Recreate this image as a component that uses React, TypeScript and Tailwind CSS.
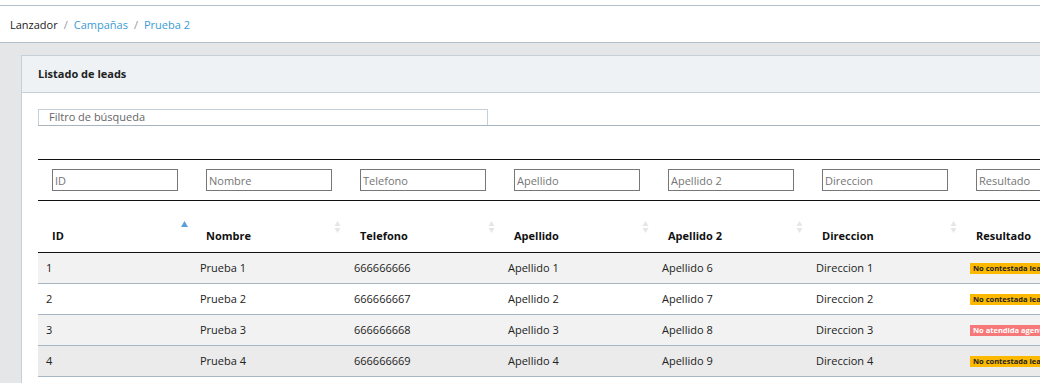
const columns = ['ID', 'Nombre', 'Telefono', 'Apellido', 'Apellido 2', 'Direccion', 'Resultado'];

type Lead = {
  id: number;
  nombre: string;
  telefono: string;
  apellido: string;
  apellido2: string;
  direccion: string;
  resultado: 'contestada' | 'atendida';
};

const leads: Lead[] = [
  { id: 1, nombre: 'Prueba 1', telefono: '666666666', apellido: 'Apellido 1', apellido2: 'Apellido 6', direccion: 'Direccion 1', resultado: 'contestada' },
  { id: 2, nombre: 'Prueba 2', telefono: '666666667', apellido: 'Apellido 2', apellido2: 'Apellido 7', direccion: 'Direccion 2', resultado: 'contestada' },
  { id: 3, nombre: 'Prueba 3', telefono: '666666668', apellido: 'Apellido 3', apellido2: 'Apellido 8', direccion: 'Direccion 3', resultado: 'atendida' },
  { id: 4, nombre: 'Prueba 4', telefono: '666666669', apellido: 'Apellido 4', apellido2: 'Apellido 9', direccion: 'Direccion 4', resultado: 'contestada' },
];

function SortIcon({ active }: { active?: boolean }) {
  if (active) {
    return (
      <svg width="7" height="6" viewBox="0 0 7 6" className="absolute right-[4px] top-[20px]">
        <path d="M3.5 0 L7 6 L0 6 Z" fill="#5a9fd8" />
      </svg>
    );
  }
  return (
    <svg width="7" height="12" viewBox="0 0 7 12" className="absolute right-[5px] top-[20px]">
      <path d="M3.5 0 L6.5 5 L0.5 5 Z" fill="#e6e6e6" />
      <path d="M3.5 12 L6.5 7 L0.5 7 Z" fill="#e6e6e6" />
    </svg>
  );
}

function Badge({ kind }: { kind: Lead['resultado'] }) {
  if (kind === 'atendida') {
    return (
      <span className="inline-block align-middle whitespace-nowrap bg-[#f77878] pl-[3px] pr-[3px] text-[7.5px] leading-[11px] font-bold text-white">
        No atendida agente
      </span>
    );
  }
  return (
    <span className="inline-block align-middle whitespace-nowrap bg-[#fcb900] pl-[3px] pr-[3px] text-[7.5px] leading-[11px] font-bold text-[#222]">
      No contestada lead
    </span>
  );
}

export default function App() {
  return (
    <div className="w-[1040px] h-[383px] overflow-hidden bg-[#e4e6e8] font-['Open_Sans',sans-serif] text-[11px] text-[#222]">
      <div className="h-[5px] bg-white" />
      <div className="h-[38px] bg-white border-y border-[#b3bec7] flex items-center pl-[10px] pt-[2px] gap-[6px]">
        <span className="text-[#222]">Lanzador</span>
        <span className="text-[#999]">/</span>
        <span className="text-[#3c9ad6]">Campañas</span>
        <span className="text-[#999]">/</span>
        <span className="text-[#3c9ad6]">Prueba 2</span>
      </div>

      <div className="pl-[21px] pt-[12px]">
        <div className="w-[1120px] bg-white border border-[#c6d0d8]">
          <div className="h-[37px] bg-[#eef2f5] border-b border-[#c6d0d8] flex items-center pl-[16px] pt-[1px]">
            <span className="font-bold text-[11px] text-[#222]">Listado de leads</span>
          </div>

          <div className="pl-[16px] pt-[16px] pb-[40px]">
            <div className="border-b border-[#a9b5be]">
              <input
                className="block w-[450px] h-[16px] border border-b-0 border-[#c6d0d8] px-[10px] text-[11px] placeholder:text-[#666] outline-none"
                placeholder="Filtro de búsqueda"
              />
            </div>

            <table className="mt-[33px] border-collapse table-fixed w-[1078px]">
              <colgroup>
                {columns.map((c) => (
                  <col key={c} className="w-[154px]" />
                ))}
              </colgroup>
              <thead>
                <tr className="border-y border-[#111]">
                  {columns.map((c) => (
                    <td key={c} className="h-[41px] pl-[14px] align-middle">
                      <input
                        className="block w-[126px] h-[22px] border border-[#777] px-[2px] text-[11px] placeholder:text-[#757575] outline-none"
                        placeholder={c}
                      />
                    </td>
                  ))}
                </tr>
                <tr className="border-b border-[#111]">
                  {columns.map((c, i) => (
                    <th
                      key={c}
                      className="relative h-[52px] pl-[14px] pb-[8px] align-bottom text-left font-bold text-[11px] text-[#111]"
                    >
                      {c}
                      {i < columns.length - 1 && <SortIcon active={i === 0} />}
                    </th>
                  ))}
                </tr>
              </thead>
              <tbody>
                {leads.map((l, i) => (
                  <tr
                    key={l.id}
                    className={
                      'border-b border-[#a7b6c2] ' +
                      (i === 3 ? 'bg-[#ebebeb]' : i % 2 === 0 ? 'bg-[#f1f2f1]' : 'bg-white')
                    }
                  >
                    <td className="h-[31px] pl-[8px]">{l.id}</td>
                    <td className="pl-[8px]">{l.nombre}</td>
                    <td className="pl-[8px]">{l.telefono}</td>
                    <td className="pl-[8px]">{l.apellido}</td>
                    <td className="pl-[8px]">{l.apellido2}</td>
                    <td className="pl-[8px]">{l.direccion}</td>
                    <td className="pl-[8px]">
                      <Badge kind={l.resultado} />
                    </td>
                  </tr>
                ))}
              </tbody>
            </table>
          </div>
        </div>
      </div>
    </div>
  );
}
